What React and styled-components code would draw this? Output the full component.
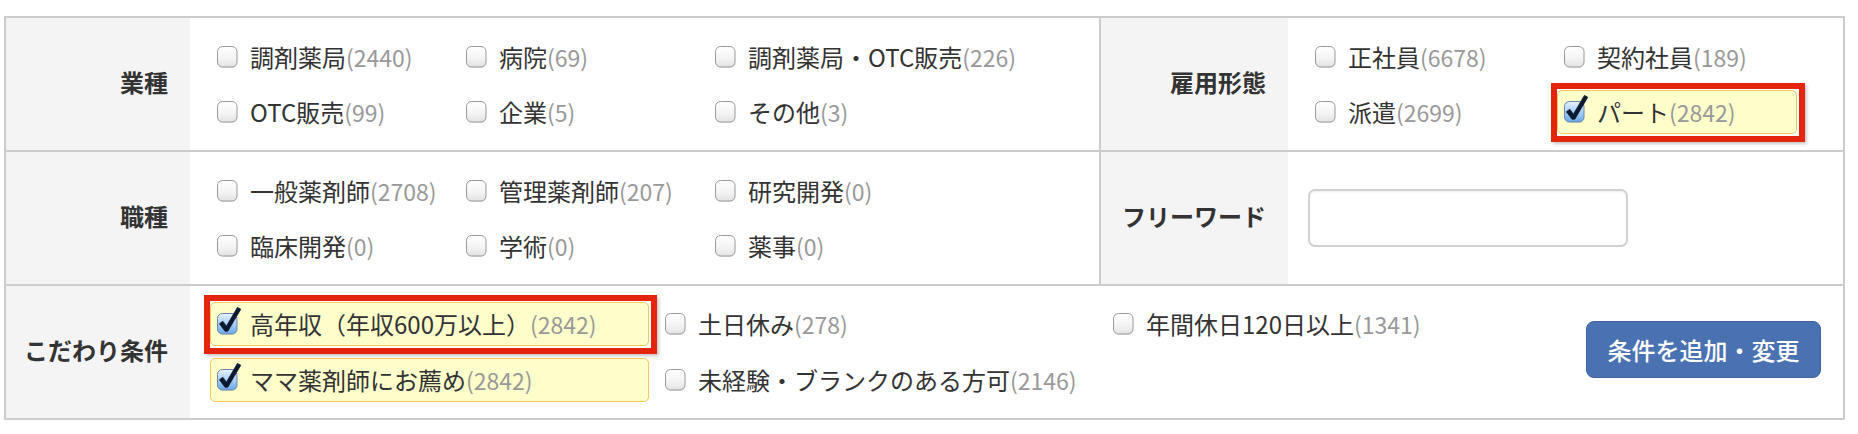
import React, { useId } from "react";
import styled, { createGlobalStyle } from "styled-components";

const GlobalStyle = createGlobalStyle`
  html, body { margin: 0; padding: 0; background: #fff; }
  body {
    font-family: "Noto Sans CJK JP", "Noto Sans", sans-serif;
    color: #333;
  }
  * { box-sizing: border-box; }
`;

const Table = styled.div`
  margin: 16px 0 0 4px;
  width: 1841px;
  border: 2px solid #cccccc;
`;

const Row = styled.div`
  display: flex;
  height: 132px;
  & + & { border-top: 2px solid #cccccc; height: 134px; }
`;

const Label = styled.div`
  flex: none;
  width: ${(p) => p.$w}px;
  background: #f4f4f4;
  display: flex;
  align-items: center;
  justify-content: flex-end;
  padding: 0 22px 5px 0;
  font-size: 24px;
  font-weight: 700;
  color: #333;
  border-left: ${(p) => (p.$divider ? "2px solid #cccccc" : "none")};
`;

const Options = styled.div`
  flex: ${(p) => (p.$w ? "none" : "1")};
  width: ${(p) => (p.$w ? `${p.$w}px` : "auto")};
  padding-left: 20px;
  display: grid;
  grid-template-columns: repeat(${(p) => p.$cols}, ${(p) => p.$colW}px);
  align-content: center;
  row-gap: ${(p) => p.$gap || 11}px;
`;

const Item = styled.label`
  position: relative;
  display: flex;
  align-items: center;
  height: 44px;
  margin-right: 9px;
  padding: 0 6px;
  border: 1px solid ${(p) => (p.$checked ? "#f6c75e" : "transparent")};
  border-radius: 5px;
  background: ${(p) => (p.$checked ? "#ffffcc" : "transparent")};
  font-size: 24px;
  color: #333;
  white-space: nowrap;
  cursor: pointer;
`;

const Text = styled.span`
  margin-left: 12px;
  line-height: 1;
`;

const Count = styled.span`
  color: #999;
  font-size: 23px;
`;

const Annotation = styled.span`
  position: absolute;
  top: -8px;
  left: -7px;
  right: -9px;
  bottom: -9px;
  border: 6px solid #e2250c;
  box-shadow: 2px 2px 3px rgba(0, 0, 0, 0.22);
  pointer-events: none;
`;

const BoxSvg = styled.svg`
  flex: none;
  overflow: visible;
  display: block;
`;

const FreeInput = styled.input`
  margin-left: 20px;
  width: 320px;
  height: 58px;
  border: 2px solid #d2d2d2;
  border-radius: 7px;
  box-shadow: inset 0 1px 2px rgba(0, 0, 0, 0.08);
  font-size: 22px;
  padding: 0 12px;
  outline: none;
  font-family: inherit;
`;

const FreeCell = styled.div`
  flex: 1;
  display: flex;
  align-items: center;
`;

const ConditionCell = styled.div`
  flex: 1;
  display: flex;
  align-items: center;
  justify-content: space-between;
  padding-right: 22px;
`;

const Button = styled.button`
  width: 235px;
  height: 57px;
  margin-bottom: 6px;
  background: #4a72b3;
  border: 1px solid #3e64a2;
  border-radius: 8px;
  color: #fff;
  font-family: inherit;
  font-size: 24px;
  font-weight: 500;
  cursor: pointer;
`;

function CheckIcon({ checked }) {
  const id = useId().replace(/:/g, "");
  return (
    <BoxSvg width="21" height="22" viewBox="0 0 21 22">
      <defs>
        <linearGradient id={`g${id}`} x1="0" y1="0" x2="0" y2="1">
          {checked ? (
            <>
              <stop offset="0" stopColor="#e8f3ff" />
              <stop offset="0.5" stopColor="#a9d0f7" />
              <stop offset="1" stopColor="#6aa7ea" />
            </>
          ) : (
            <>
              <stop offset="0" stopColor="#ffffff" />
              <stop offset="0.6" stopColor="#f3f3f3" />
              <stop offset="1" stopColor="#e2e2e2" />
            </>
          )}
        </linearGradient>
      </defs>
      <rect
        x="0.75"
        y="1.5"
        width="19.5"
        height="20.5"
        rx="5"
        fill="#000"
        opacity="0.08"
      />
      <rect
        x="0.5"
        y="0.5"
        width="19.5"
        height="20.5"
        rx="5"
        fill={`url(#g${id})`}
        stroke={checked ? "#6a86ab" : "#9a9a9a"}
        strokeWidth="1"
      />
      {checked && (
        <path
          d="M2.4 10.8 L5.8 8.2 L9.4 13.2 L20.4 -5.6 L23.8 -3.8 L10.8 18.2 L8.0 18.2 Z"
          fill="#0c1a30"
          stroke="#0c1a30"
          strokeWidth="0.8"
          strokeLinejoin="round"
        />
      )}
    </BoxSvg>
  );
}

function Option({ text, count, checked, annotated }) {
  return (
    <Item $checked={checked}>
      <CheckIcon checked={checked} />
      <Text>
        {text}
        <Count>({count})</Count>
      </Text>
      {annotated && <Annotation />}
    </Item>
  );
}

const industry = [
  ["調剤薬局", 2440],
  ["病院", 69],
  ["調剤薬局・OTC販売", 226],
  ["OTC販売", 99],
  ["企業", 5],
  ["その他", 3],
];

const employment = [
  ["正社員", 6678, false],
  ["契約社員", 189, false],
  ["派遣", 2699, false],
  ["パート", 2842, true],
];

const jobs = [
  ["一般薬剤師", 2708],
  ["管理薬剤師", 207],
  ["研究開発", 0],
  ["臨床開発", 0],
  ["学術", 0],
  ["薬事", 0],
];

const conditions = [
  ["高年収（年収600万以上）", 2842, true],
  ["土日休み", 278, false],
  ["年間休日120日以上", 1341, false],
  ["ママ薬剤師にお薦め", 2842, true],
  ["未経験・ブランクのある方可", 2146, false],
];

export default function App() {
  return (
    <>
      <GlobalStyle />
      <Table>
        <Row>
          <Label $w={184}>業種</Label>
          <Options $w={909} $cols={3} $colW={249}>
            {industry.map(([t, c]) => (
              <Option key={t} text={t} count={c} />
            ))}
          </Options>
          <Label $w={189} $divider>
            雇用形態
          </Label>
          <Options $cols={2} $colW={249}>
            {employment.map(([t, c, ch]) => (
              <Option key={t} text={t} count={c} checked={ch} annotated={ch} />
            ))}
          </Options>
        </Row>
        <Row>
          <Label $w={184}>職種</Label>
          <Options $w={909} $cols={3} $colW={249}>
            {jobs.map(([t, c]) => (
              <Option key={t} text={t} count={c} />
            ))}
          </Options>
          <Label $w={189} $divider>
            フリーワード
          </Label>
          <FreeCell>
            <FreeInput type="text" />
          </FreeCell>
        </Row>
        <Row>
          <Label $w={184}>こだわり条件</Label>
          <ConditionCell>
            <Options $cols={3} $colW={448} $gap={12}>
              {conditions.map(([t, c, ch], i) => (
                <Option
                  key={t}
                  text={t}
                  count={c}
                  checked={ch}
                  annotated={i === 0}
                />
              ))}
            </Options>
            <Button type="button">条件を追加・変更</Button>
          </ConditionCell>
        </Row>
      </Table>
    </>
  );
}
